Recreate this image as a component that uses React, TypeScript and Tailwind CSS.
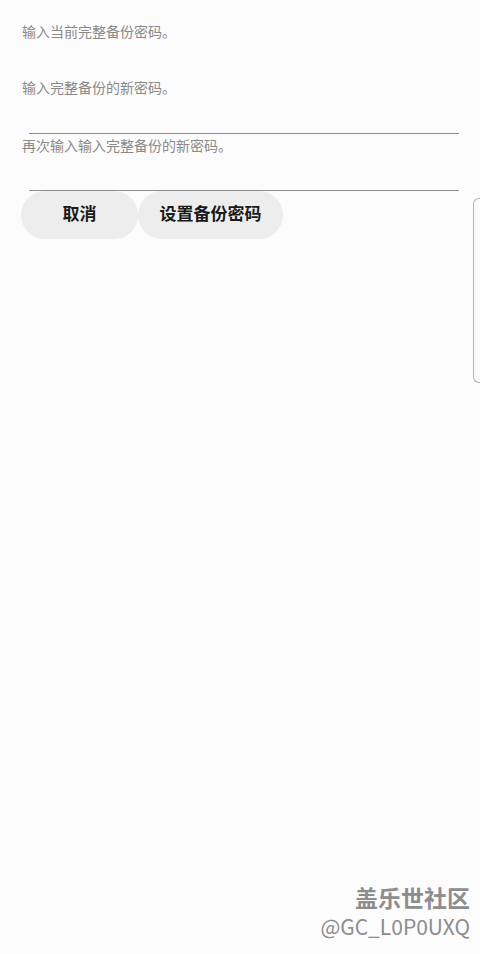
export default function App() {
  const font = { fontFamily: '"Roboto", "Noto Sans CJK SC", sans-serif' }
  return (
    <div className="relative h-[954px] w-[480px] overflow-hidden bg-[#fcfcfc]" style={font}>
      <div className="flex flex-col px-[22px]">
        <div className="h-[21px]" />
        <p className="h-[22px] text-[14px] leading-[22px] text-[#8a8a8a]">输入当前完整备份密码。</p>
        <div className="h-[34px]" />
        <p className="h-[22px] text-[14px] leading-[22px] text-[#8a8a8a]">输入完整备份的新密码。</p>
        <div className="h-[34px]" />
        <div className="ml-[7px] mr-[-1px] border-b border-[#8c8c8c]" />
        <p className="mt-[1px] h-[22px] text-[14px] leading-[22px] text-[#8a8a8a]">再次输入输入完整备份的新密码。</p>
        <div className="h-[33px]" />
        <div className="ml-[7px] mr-[-1px] border-b border-[#8c8c8c]" />
        <div className="-ml-px flex">
          <button className="h-[48px] w-[117px] rounded-full bg-[#ededed] text-[17px] font-bold text-[#1a1a1a]">取消</button>
          <button className="h-[48px] w-[145px] rounded-full bg-[#ededed] text-[17px] font-bold text-[#1a1a1a]">设置备份密码</button>
        </div>
      </div>
      <div className="absolute right-0 top-[198px] h-[185px] w-[7px] rounded-l-[6px] border border-r-0 border-[#b5b5b5]" />
      <div
        className="absolute bottom-[14px] right-[10px] flex flex-col items-end"
        style={{ fontFamily: '"Noto Sans CJK SC", sans-serif' }}
      >
        <span className="text-[23px] font-bold leading-[30px] text-[#8d8d8d]">盖乐世社区</span>
        <span className="text-[21px] leading-[28px] text-[#8d8d8d]">@GC_L0P0UXQ</span>
      </div>
    </div>
  )
}
